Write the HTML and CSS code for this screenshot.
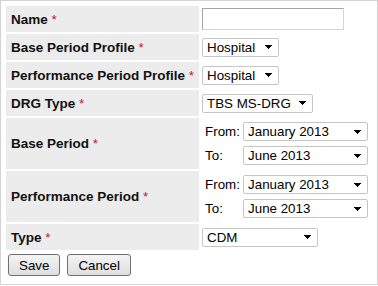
FILE: index.html
```html
<!DOCTYPE html>
<html lang="en">
<head>
<meta charset="UTF-8">
<title>Period Settings</title>
<link rel="stylesheet" href="styles.css">
</head>
<body>

<div class="form-box">
    <table class="form-table">
        <tr>
            <th>Name <span class="req">*</span></th>
            <td><input type="text" class="text-in"></td>
        </tr>
        <tr>
            <th>Base Period Profile <span class="req">*</span></th>
            <td><select class="sel sel-profile"><option>Hospital</option></select></td>
        </tr>
        <tr>
            <th>Performance Period Profile <span class="req">*</span></th>
            <td><select class="sel sel-profile"><option>Hospital</option></select></td>
        </tr>
        <tr>
            <th>DRG Type <span class="req">*</span></th>
            <td><select class="sel sel-drg"><option>TBS MS-DRG</option></select></td>
        </tr>
        <tr>
            <th>Base Period <span class="req">*</span></th>
            <td>
                <div class="range">
                    <span>From:</span>
                    <select class="sel sel-range"><option>January 2013</option></select>
                    <span>To:</span>
                    <select class="sel sel-range"><option>June 2013</option></select>
                </div>
            </td>
        </tr>
        <tr>
            <th>Performance Period <span class="req">*</span></th>
            <td>
                <div class="range">
                    <span>From:</span>
                    <select class="sel sel-range"><option>January 2013</option></select>
                    <span>To:</span>
                    <select class="sel sel-range"><option>June 2013</option></select>
                </div>
            </td>
        </tr>
        <tr>
            <th>Type <span class="req">*</span></th>
            <td><select class="sel sel-type"><option>CDM</option></select></td>
        </tr>
    </table>

    <div class="actions">
        <button>Save</button>
        <button>Cancel</button>
    </div>
</div>

</body>
</html>
```

FILE: styles.css
```css
body { margin: 0; font-family: "Liberation Sans", Arial, sans-serif; font-size: 13.33px; color: #000; background: #fff; }
.form-box { width: 378px; height: 285px; box-sizing: border-box; border: 1px solid #d4d4d4; padding: 3px; }
.form-table { border-spacing: 2px; }
.form-table th { width: 184px; height: 26px; padding: 0 5px; background: #ececec; text-align: left; vertical-align: middle; font-size: 13.5px; font-weight: bold; color: #111; white-space: nowrap; }
.form-table td { padding: 0 1px; vertical-align: middle; }
.req { color: #c8102e; font-weight: normal; }
.text-in { display: block; width: 142px; height: 22px; box-sizing: border-box; margin: 0; border: 1px solid; border-color: #a5a5a5 #d6d6d6 #d6d6d6 #a5a5a5; }
.sel { display: block; height: 19px; box-sizing: border-box; margin: 0; padding: 0 0 0 4px; font-family: inherit; font-size: 13.33px; color: #000; background-color: #fff; border: 1px solid #c6c6c6; border-radius: 2px; -webkit-appearance: none; appearance: none;
    background-image: linear-gradient(45deg, transparent 50%, #000 50%), linear-gradient(135deg, #000 50%, transparent 50%);
    background-position: right 9px center, right 5px center; background-size: 4px 4px; background-repeat: no-repeat; }
.sel-profile { width: 77px; }
.sel-drg { width: 111px; }
.sel-type { width: 116px; }
.sel-range { width: 125px; }
.range { display: grid; grid-template-columns: 38px 125px; row-gap: 5px; align-items: center; padding: 4px 4px 4px 3px; }
.actions { display: flex; gap: 7px; margin: 2px 0 0 4px; }
button { height: 22px; padding: 0 10px; font-family: inherit; font-size: 13.33px; color: #000; border: 1px solid #707070; border-radius: 3px; background: linear-gradient(#f4f4f4, #dedede); }
```
